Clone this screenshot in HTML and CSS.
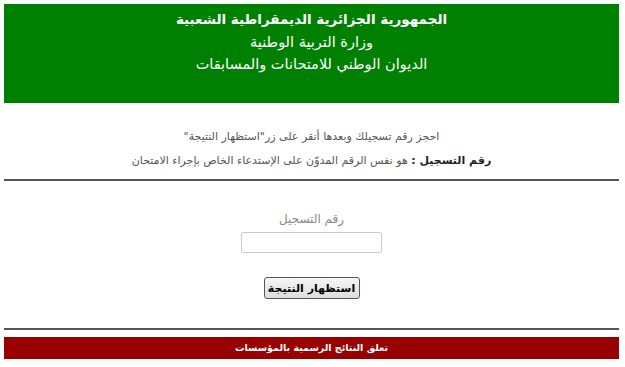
FILE: index.html
```html
<!DOCTYPE html>
<html lang="ar" dir="rtl">
  <head>
    <meta charset="UTF-8" />
    <title>نتائج الامتحانات</title>
    <link rel="stylesheet" href="styles.css">
  </head>
  <body>
    <div class="header">
      <h1>الجمهورية الجزائرية الديمقراطية الشعبية</h1>
      <p>وزارة التربية الوطنية</p>
      <p>الديوان الوطني للامتحانات والمسابقات</p>
    </div>

    <div class="notice">
      <p>احجز رقم تسجيلك وبعدها أنقر على زر"استظهار النتيجة"</p>
      <p><b>رقم التسجيل :</b> هو نفس الرقم المدوّن على الإستدعاء الخاص بإجراء الامتحان</p>
    </div>

    <hr class="rule" />

    <form class="search">
      <label for="num">رقم التسجيل</label>
      <input type="text" id="num" />
      <button type="submit">استظهار النتيجة</button>
    </form>

    <hr class="rule" />

    <div class="footer">تعلق النتائج الرسمية بالمؤسسات</div>
  </body>
</html>
```

FILE: styles.css
```css
body {
  margin: 4px 6px 4px 4px;
  font-family: "DejaVu Sans", Arial, sans-serif;
  background: #fff;
}

.header {
  background: #008000;
  color: #fff;
  text-align: center;
  height: 99px;
  padding-top: 4px;
  box-sizing: border-box;
}

.header h1 {
  margin: 0;
  font-size: 13.5px;
  line-height: 23px;
}

.header p {
  margin: 0;
  font-size: 14.5px;
  line-height: 22px;
}

.notice {
  text-align: center;
  font-size: 11px;
  color: #555;
  padding-top: 22px;
}

.notice p {
  margin: 0;
  line-height: 24px;
}

.notice b {
  color: #222;
}

.rule {
  border: none;
  border-top: 2px solid #555;
  margin: 6px 0 0;
}

.search {
  display: flex;
  flex-direction: column;
  align-items: center;
  padding-top: 30px;
}

.search label {
  font-size: 12px;
  color: #888;
  line-height: 16px;
}

.search input {
  width: 141px;
  height: 21px;
  box-sizing: border-box;
  border: 1px solid #ccc;
  border-radius: 2px;
  margin-top: 5px;
}

.search button {
  margin-top: 24px;
  width: 96px;
  height: 22px;
  padding: 0;
  white-space: nowrap;
  font-family: "DejaVu Sans", Arial, sans-serif;
  font-size: 11px;
  font-weight: bold;
  color: #000;
  border: 1px solid #555;
  border-radius: 3px;
  background: linear-gradient(#f6f6f6, #dcdcdc);
}

.search + .rule {
  margin-top: 29px;
}

.footer {
  margin-top: 7px;
  background: #990000;
  color: #fff;
  text-align: center;
  font-size: 9.5px;
  font-weight: bold;
  line-height: 22px;
}
```
